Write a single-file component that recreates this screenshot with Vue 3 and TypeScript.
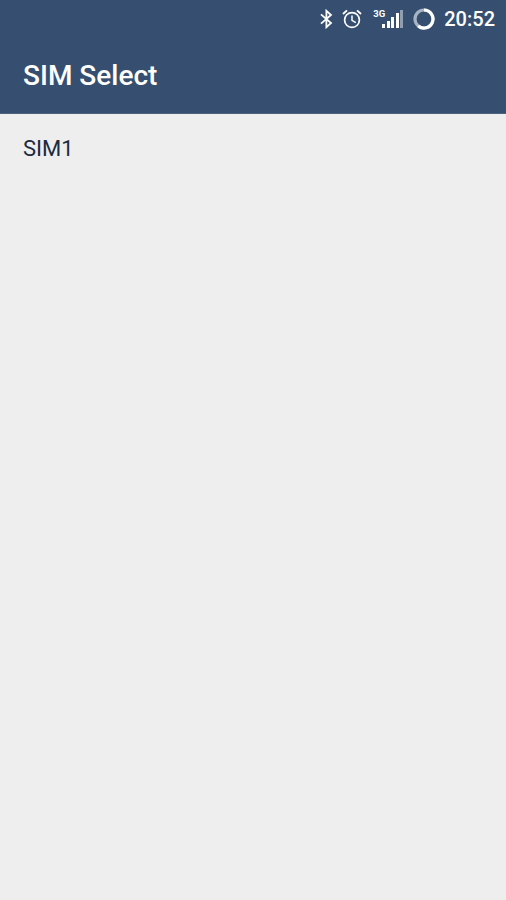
<script setup lang="ts">
const bars = [
  { h: 4, o: 1 },
  { h: 7, o: 1 },
  { h: 11, o: 1 },
  { h: 15, o: 1 },
  { h: 18, o: 0.45 },
]
</script>

<template>
  <div class="screen">
    <header class="appbar">
      <div class="status">
        <svg class="bt" width="13" height="20" viewBox="0 0 13 20" fill="none" stroke="#fff" stroke-width="1.8">
          <path d="M1 5.4 11 14 6.4 18.2V1.8L11 6 1 14.6" />
        </svg>
        <svg class="alarm" width="20" height="20" viewBox="0 0 20 20" fill="none" stroke="#fff">
          <circle cx="10" cy="11" r="7.4" stroke-width="1.7" />
          <path d="M10 6.5V11.4L13.8 13.6" stroke-width="1.5" />
          <path d="M1 5 5 1.4M19 5 15 1.4" stroke-width="1.9" />
        </svg>
        <div class="signal">
          <span class="net">3G</span>
          <div class="bars">
            <i v-for="(b, i) in bars" :key="i" :style="{ height: b.h + 'px', opacity: b.o }"></i>
          </div>
        </div>
        <svg class="battery" width="22" height="22" viewBox="0 0 22 22" fill="none" stroke-width="3.2">
          <circle cx="11" cy="11" r="9" stroke="#a9b4c2" />
          <path d="M11 2A9 9 0 1 1 5.2 17.9" stroke="#fff" />
        </svg>
        <span class="time">20:52</span>
      </div>
      <div class="title">SIM Select</div>
    </header>
    <main class="list">
      <div class="item">SIM1</div>
    </main>
  </div>
</template>

<style scoped>
.screen {
  width: 506px;
  height: 900px;
  background: #eeeeee;
  font-family: Roboto, "Liberation Sans", sans-serif;
  overflow: hidden;
}
.appbar {
  height: 114px;
  box-sizing: border-box;
  background: #364f71;
  border-bottom: 1px solid #4a6280;
}
.status {
  height: 37px;
  display: flex;
  align-items: center;
  justify-content: flex-end;
  padding-right: 11px;
  color: #fff;
}
.bt { margin-right: 9px; }
.alarm { margin-right: 11px; }
.signal {
  position: relative;
  width: 30px;
  height: 18px;
  margin-right: 10px;
}
.net {
  position: absolute;
  left: 0;
  top: -1px;
  font-size: 9.5px;
  font-weight: 700;
  line-height: 10px;
}
.bars {
  position: absolute;
  right: 0;
  bottom: 0;
  display: flex;
  align-items: flex-end;
  gap: 1.5px;
}
.bars i {
  display: block;
  width: 3px;
  background: #fff;
}
.battery { margin-right: 9px; }
.time {
  font-size: 20px;
  font-weight: 500;
  line-height: 22px;
}
.title {
  padding-left: 23px;
  margin-top: 22px;
  font-size: 28px;
  font-weight: 500;
  line-height: 34px;
  color: #fff;
}
.list { padding: 20px 23px; }
.item {
  font-size: 22px;
  line-height: 30px;
  color: #1c2a3f;
}
</style>
